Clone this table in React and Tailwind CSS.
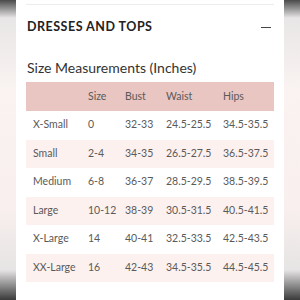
import React from 'react';

const ROWS = [
  ['X-Small', '0', '32-33', '24.5-25.5', '34.5-35.5'],
  ['Small', '2-4', '34-35', '26.5-27.5', '36.5-37.5'],
  ['Medium', '6-8', '36-37', '28.5-29.5', '38.5-39.5'],
  ['Large', '10-12', '38-39', '30.5-31.5', '40.5-41.5'],
  ['X-Large', '14', '40-41', '32.5-33.5', '42.5-43.5'],
  ['XX-Large', '16', '42-43', '34.5-35.5', '44.5-45.5'],
];

const App = () => {
  return (
    <div className="w-[300px] h-[300px] overflow-hidden flex bg-[linear-gradient(to_bottom,#4a4a4a_0%,#e8e6e6_6%,#faf3f2_30%,#f8efee_70%,#e6e4e4_90%,#3a3a3a_100%)] font-['Lato',sans-serif]">
      <div className="ml-[16px] w-[268px] h-[300px] bg-white px-[10px] flex flex-col">
        {/* Accordion header */}
        <div className="mt-[4px] border-t border-[#ececec] flex items-center justify-between pt-[15px] pl-[1px] pr-[3px]">
          <h2 className="text-[12.5px] font-bold tracking-[0.5px] text-[#222] leading-[14px]">DRESSES AND TOPS</h2>
          <span className="w-[10px] h-[1px] bg-[#444]" />
        </div>

        <h3 className="mt-[25px] pl-[1px] text-[14px] text-[#333] leading-[18px]">Size Measurements (Inches)</h3>

        {/* Table */}
        <div className="mt-[5px] text-[10.5px] text-[#5a5a5a] whitespace-nowrap">
          <div className="h-[29px] bg-[#e9c6c1] grid grid-cols-[62px_37px_41px_57px_1fr] items-center">
            <span />
            <span>Size</span>
            <span>Bust</span>
            <span>Waist</span>
            <span>Hips</span>
          </div>
          {ROWS.map((r, i) => (
            <div
              key={r[0]}
              className={`h-[28.5px] grid grid-cols-[62px_37px_41px_57px_1fr] items-center ${i % 2 === 1 ? 'bg-[#fdf1ef]' : 'bg-white'}`}
            >
              <span className="pl-[7px]">{r[0]}</span>
              <span>{r[1]}</span>
              <span>{r[2]}</span>
              <span>{r[3]}</span>
              <span>{r[4]}</span>
            </div>
          ))}
        </div>
      </div>
    </div>
  );
};

export default App;
